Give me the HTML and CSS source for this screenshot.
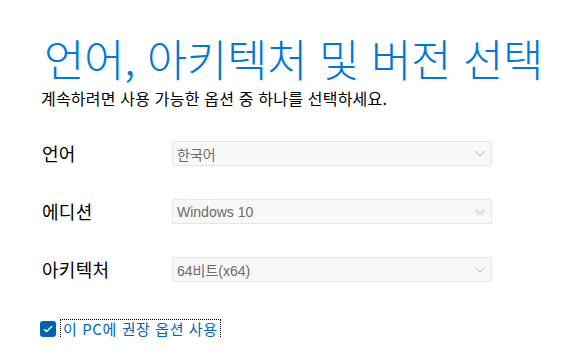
FILE: index.html
```html
<!DOCTYPE html>
<html lang="ko">
<head>
<meta charset="utf-8">
<link rel="stylesheet" href="styles.css">
</head>
<body>
<main class="page">
  <h1 class="title">언어, 아키텍처 및 버전 선택</h1>
  <p class="subtitle">계속하려면 사용 가능한 옵션 중 하나를 선택하세요.</p>
  <div class="form">
    <div class="row">
      <span class="label">언어</span>
      <div class="select"><span class="value">한국어</span>
        <svg class="chev" width="10" height="6" viewBox="0 0 10 6"><path d="M0.5 0.5 L5 5 L9.5 0.5" fill="none" stroke="#b4b4b4" stroke-width="1"/></svg>
      </div>
    </div>
    <div class="row">
      <span class="label">에디션</span>
      <div class="select"><span class="value">Windows 10</span>
        <svg class="chev" width="10" height="6" viewBox="0 0 10 6"><path d="M0.5 0.5 L5 5 L9.5 0.5" fill="none" stroke="#b4b4b4" stroke-width="1"/></svg>
      </div>
    </div>
    <div class="row">
      <span class="label">아키텍처</span>
      <div class="select"><span class="value">64비트(x64)</span>
        <svg class="chev" width="10" height="6" viewBox="0 0 10 6"><path d="M0.5 0.5 L5 5 L9.5 0.5" fill="none" stroke="#b4b4b4" stroke-width="1"/></svg>
      </div>
    </div>
  </div>
  <label class="check">
    <span class="box"><svg width="10" height="8" viewBox="0 0 10 8"><path d="M1 4.2 L3.6 6.6 L9 1.2" fill="none" stroke="#fff" stroke-width="1.4"/></svg></span>
    <span class="check-text">이 PC에 권장 옵션 사용</span>
  </label>
</main>
</body>
</html>
```
FILE: styles.css
```css
html, body {
  margin: 0;
  padding: 0;
  background: #ffffff;
}
body {
  font-family: "Noto Sans CJK KR", "Liberation Sans", sans-serif;
  color: #000;
}
.page {
  padding: 32px 0 0 42px;
  display: flex;
  flex-direction: column;
  align-items: flex-start;
}
.title {
  margin: 0 0 0 2px;
  font-size: 44px;
  line-height: 52px;
  font-weight: 300;
  color: #0078d7;
  letter-spacing: -0.4px;
  white-space: nowrap;
}
.subtitle {
  margin: 4px 0 0 -1px;
  font-size: 16px;
  line-height: 20px;
  letter-spacing: 0.2px;
}
.form {
  margin-top: 33px;
  display: flex;
  flex-direction: column;
  gap: 33px;
}
.row {
  display: flex;
  align-items: center;
  height: 25px;
}
.label {
  width: 130px;
  font-size: 18px;
  line-height: 25px;
  letter-spacing: 0.3px;
}
.select {
  box-sizing: border-box;
  width: 320px;
  height: 25px;
  background: #f8f8f8;
  border: 1px solid #e6e6e6;
  border-radius: 2px;
  display: flex;
  align-items: center;
  justify-content: space-between;
  padding: 0 6px 0 4px;
}
.value {
  font-family: "Liberation Sans", "Noto Sans CJK KR", sans-serif;
  font-size: 14px;
  color: #6b6b6b;
}
.chev {
  display: block;
}
.check {
  margin-top: 38px;
  margin-left: -2px;
  display: flex;
  align-items: center;
  gap: 5px;
}
.box {
  width: 16px;
  height: 16px;
  border-radius: 3px;
  background: #0063b1;
  display: flex;
  align-items: center;
  justify-content: center;
}
.check-text {
  font-size: 15px;
  line-height: 18px;
  color: #0067c0;
  letter-spacing: 0.6px;
  outline: 1px dotted #000;
  padding: 0 2px 0 2px;
}
```
